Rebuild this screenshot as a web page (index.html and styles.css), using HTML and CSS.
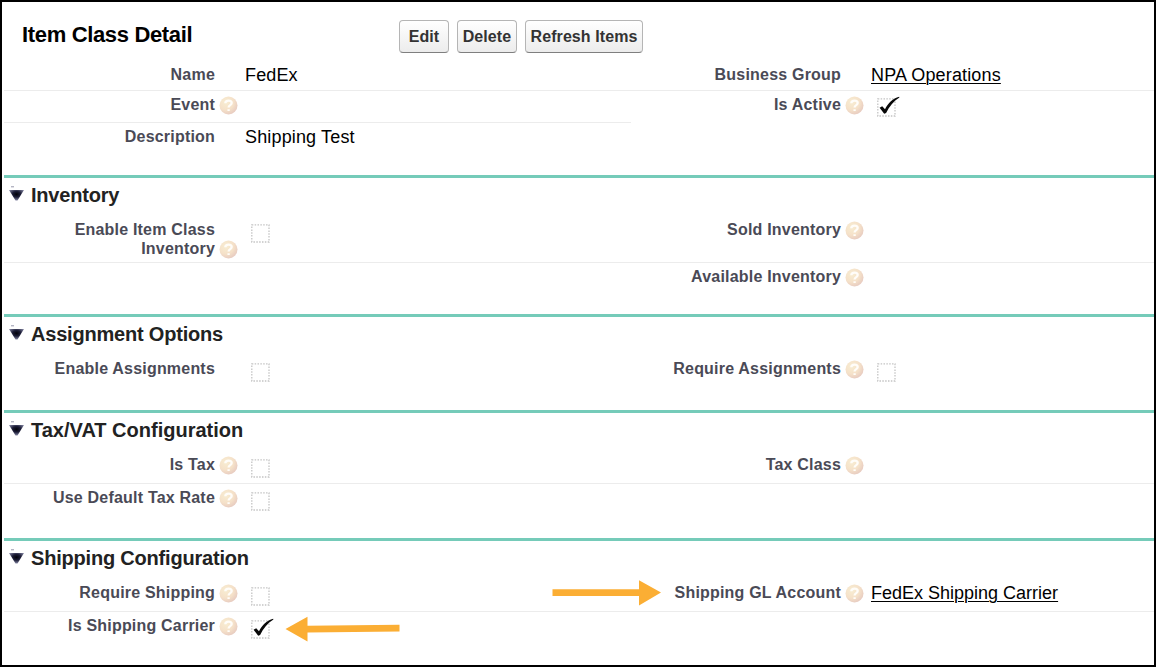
FILE: index.html
```html
<!DOCTYPE html>
<html lang="en">
<head>
<meta charset="utf-8">
<title>Item Class Detail</title>
<link rel="stylesheet" href="styles.css">
</head>
<body>
<svg class="defs" width="0" height="0" aria-hidden="true">
  <defs>
    <radialGradient id="orb" cx="0.36" cy="0.32" r="0.72">
      <stop offset="0" stop-color="#f8edd2"/>
      <stop offset="0.6" stop-color="#f5e1c9"/>
      <stop offset="1" stop-color="#e7cbc0"/>
    </radialGradient>
    <radialGradient id="tri" cx="0.5" cy="0.4" r="0.6">
      <stop offset="0" stop-color="#000008"/>
      <stop offset="0.45" stop-color="#1b1c36"/>
      <stop offset="1" stop-color="#8688a4"/>
    </radialGradient>
    <symbol id="help" viewBox="0 0 19 19">
      <circle cx="9.5" cy="9.5" r="9" fill="url(#orb)"/>
      <path d="M6.3 7.2C6.5 3.7 12.7 3.8 12.7 7.1C12.7 9.1 9.6 9.1 9.6 11.5M9.6 13.2V15" fill="none" stroke="#fffdf9" stroke-width="2.3"/>
    </symbol>
    <symbol id="box" viewBox="0 0 24 22">
      <rect x="1.8" y="3.8" width="17.2" height="17.2" fill="none" stroke="#c4c4c4" stroke-width="1.3" stroke-dasharray="1.5 1.35"/>
    </symbol>
    <symbol id="tick" viewBox="0 0 24 22">
      <path d="M3.6 12.7L6.2 11.2L9 14.2C12 8.5 17 3.2 23.2 1.8L23.4 2.6C17.4 6.2 13.4 11.5 10.1 18.1L8.2 18.8Z" fill="#080808"/>
    </symbol>
    <symbol id="caret" viewBox="0 0 15 15">
      <path d="M0 4H15L8.5 14.6H6.5Z" fill="url(#tri)"/>
      <path d="M2 .8H5" stroke="#9698ac" stroke-width="1"/>
    </symbol>
  </defs>
</svg>
<main class="page">
  <header class="header">
    <h1 class="title">Item Class Detail</h1>
    <div class="actions">
      <button class="btn btn-edit">Edit</button>
      <button class="btn btn-delete">Delete</button>
      <button class="btn btn-refresh">Refresh Items</button>
    </div>
  </header>
  <div class="row row-name">
    <div class="label"><span>Name</span></div><div class="value">FedEx</div>
    <div class="label"><span>Business Group</span></div><div class="value"><a class="link">NPA Operations</a></div>
  </div>
  <div class="row row-event">
    <div class="label"><span>Event</span><svg class="help"><use href="#help"/></svg></div><div class="value"></div>
    <div class="label"><span>Is Active</span><svg class="help"><use href="#help"/></svg></div><div class="value"><svg class="check check-active"><use href="#box"/><use href="#tick"/></svg></div>
  </div>
  <div class="row row-description">
    <div class="label"><span>Description</span></div><div class="value">Shipping Test</div>
  </div>

  <section class="section">
    <h2 class="heading"><svg class="caret"><use href="#caret"/></svg><span class="heading-short">Inventory</span></h2>
    <div class="row row-double">
      <div class="label"><span>Enable Item Class<br>Inventory</span><svg class="help"><use href="#help"/></svg></div><div class="value"><svg class="check"><use href="#box"/></svg></div>
      <div class="label"><span>Sold Inventory</span><svg class="help"><use href="#help"/></svg></div><div class="value"></div>
    </div>
    <div class="row row-available">
      <div class="label"></div><div class="value"></div>
      <div class="label"><span>Available Inventory</span><svg class="help"><use href="#help"/></svg></div><div class="value"></div>
    </div>
  </section>

  <section class="section">
    <h2 class="heading"><svg class="caret"><use href="#caret"/></svg><span class="heading-short">Assignment Options</span></h2>
    <div class="row row-assign">
      <div class="label"><span>Enable Assignments</span></div><div class="value"><svg class="check"><use href="#box"/></svg></div>
      <div class="label"><span>Require Assignments</span><svg class="help"><use href="#help"/></svg></div><div class="value"><svg class="check"><use href="#box"/></svg></div>
    </div>
  </section>

  <section class="section">
    <h2 class="heading"><svg class="caret"><use href="#caret"/></svg><span>Tax/VAT Configuration</span></h2>
    <div class="row row-single">
      <div class="label"><span>Is Tax</span><svg class="help"><use href="#help"/></svg></div><div class="value"><svg class="check"><use href="#box"/></svg></div>
      <div class="label"><span>Tax Class</span><svg class="help"><use href="#help"/></svg></div><div class="value"></div>
    </div>
    <div class="row row-last">
      <div class="label"><span>Use Default Tax Rate</span><svg class="help"><use href="#help"/></svg></div><div class="value"><svg class="check"><use href="#box"/></svg></div>
    </div>
  </section>

  <section class="section">
    <h2 class="heading"><svg class="caret"><use href="#caret"/></svg><span class="heading-short">Shipping Configuration</span></h2>
    <div class="row row-single">
      <div class="label"><span>Require Shipping</span><svg class="help"><use href="#help"/></svg></div><div class="value"><svg class="check"><use href="#box"/></svg></div>
      <div class="label"><span>Shipping GL Account</span><svg class="help"><use href="#help"/></svg></div><div class="value"><a class="link link-carrier">FedEx Shipping Carrier</a></div>
    </div>
    <div class="row row-last">
      <div class="label"><span>Is Shipping Carrier</span><svg class="help"><use href="#help"/></svg></div><div class="value"><svg class="check"><use href="#box"/><use href="#tick"/></svg></div>
    </div>
  </section>
  <svg class="arrow arrow-right" viewBox="0 0 110 26"><path d="M.5 9.2H87V.2L109 12.6L87 25.4V16H.5Z" fill="#fbae34"/></svg>
  <svg class="arrow arrow-left" viewBox="0 0 115 26"><path d="M.5 13L22.5 .7V9.7L114.5 8.7V15.6L22.5 16.6V25.6Z" fill="#fbae34"/></svg>
</main>
</body>
</html>
```

FILE: styles.css
```css
* { box-sizing: border-box; }

body {
  margin: 0;
  background: #fff;
  font-family: "Liberation Sans", Arial, sans-serif;
  color: #000;
}

.defs { position: absolute; }

.page {
  position: relative;
  width: 1156px;
  height: 667px;
  border: 2px solid #000;
  overflow: hidden;
}

.header {
  display: grid;
  grid-template-columns: 377px auto;
  height: 59px;
  padding: 18px 0 0 20px;
}

.title {
  margin: 3px 0 0;
  font-size: 22px;
  line-height: 24px;
  font-weight: 700;
  letter-spacing: -.34px;
}

.actions { display: flex; gap: 8px; }

.btn {
  height: 33px;
  padding: 0;
  border: 1px solid #b5b5b5;
  border-bottom-color: #7f7f7f;
  border-radius: 4px;
  background: linear-gradient(#fff, #ececec);
  font: 700 16px/20px "Liberation Sans", Arial, sans-serif;
  letter-spacing: .08px;
  color: #333;
  white-space: nowrap;
}

.btn-edit { width: 50px; }
.btn-delete { width: 60px; }
.btn-refresh { width: 118px; }

.row {
  display: grid;
  grid-template-columns: 237px 389px 237px 1fr;
  align-items: start;
  margin-left: 2px;
  border-bottom: 1px solid #ececec;
}

.row-name { height: 30px; }
.row-event {
  height: 32px;
  border-bottom: 0;
  background: linear-gradient(#ececec, #ececec) left bottom / 627px 1px no-repeat;
}
.row-description { height: 52px; border: 0; }
.row-double { height: 47px; }
.row-single { height: 33px; }
.row-available { height: 51px; border: 0; }
.row-assign { height: 55px; border: 0; }
.row-last { height: 54px; border: 0; }

.label {
  display: flex;
  align-items: flex-end;
  justify-content: flex-end;
  margin-left: -2px;
  padding: 4px 26px 0 0;
  font-size: 16px;
  line-height: 19px;
  font-weight: 700;
  text-align: right;
  color: #4a4a56;
  letter-spacing: .2px;
  white-space: nowrap;
}

.help {
  width: 19px;
  height: 19px;
  margin: 0 -23px -1px 4px;
  flex: none;
}

.value {
  padding: 4px 0 0 4px;
  font-size: 18px;
  line-height: 20px;
  letter-spacing: .15px;
  white-space: nowrap;
}

.link { text-decoration: underline; text-decoration-thickness: 1px; text-underline-offset: 2px; }
.link-carrier { letter-spacing: 0; }

.check {
  display: block;
  width: 24px;
  height: 22px;
  margin: 1px 0 0 5px;
}
.check-active { margin-top: 0; }

.section { border-top: 3px solid #75cbb9; margin-left: 2px; }
.section .row { margin-left: 0; }

.heading {
  display: flex;
  height: 38px;
  margin: 0;
  padding: 6px 0 0 5px;
  gap: 7px;
  font-size: 20px;
  line-height: 23px;
  font-weight: 700;
  color: #222;
}

.heading-short { letter-spacing: -.2px; }

.caret { width: 15px; height: 15px; margin-top: 2px; flex: none; }

.arrow { position: absolute; height: 26px; }
.arrow-right { left: 550px; top: 578px; width: 110px; }
.arrow-left { left: 283px; top: 614px; width: 115px; }
```
